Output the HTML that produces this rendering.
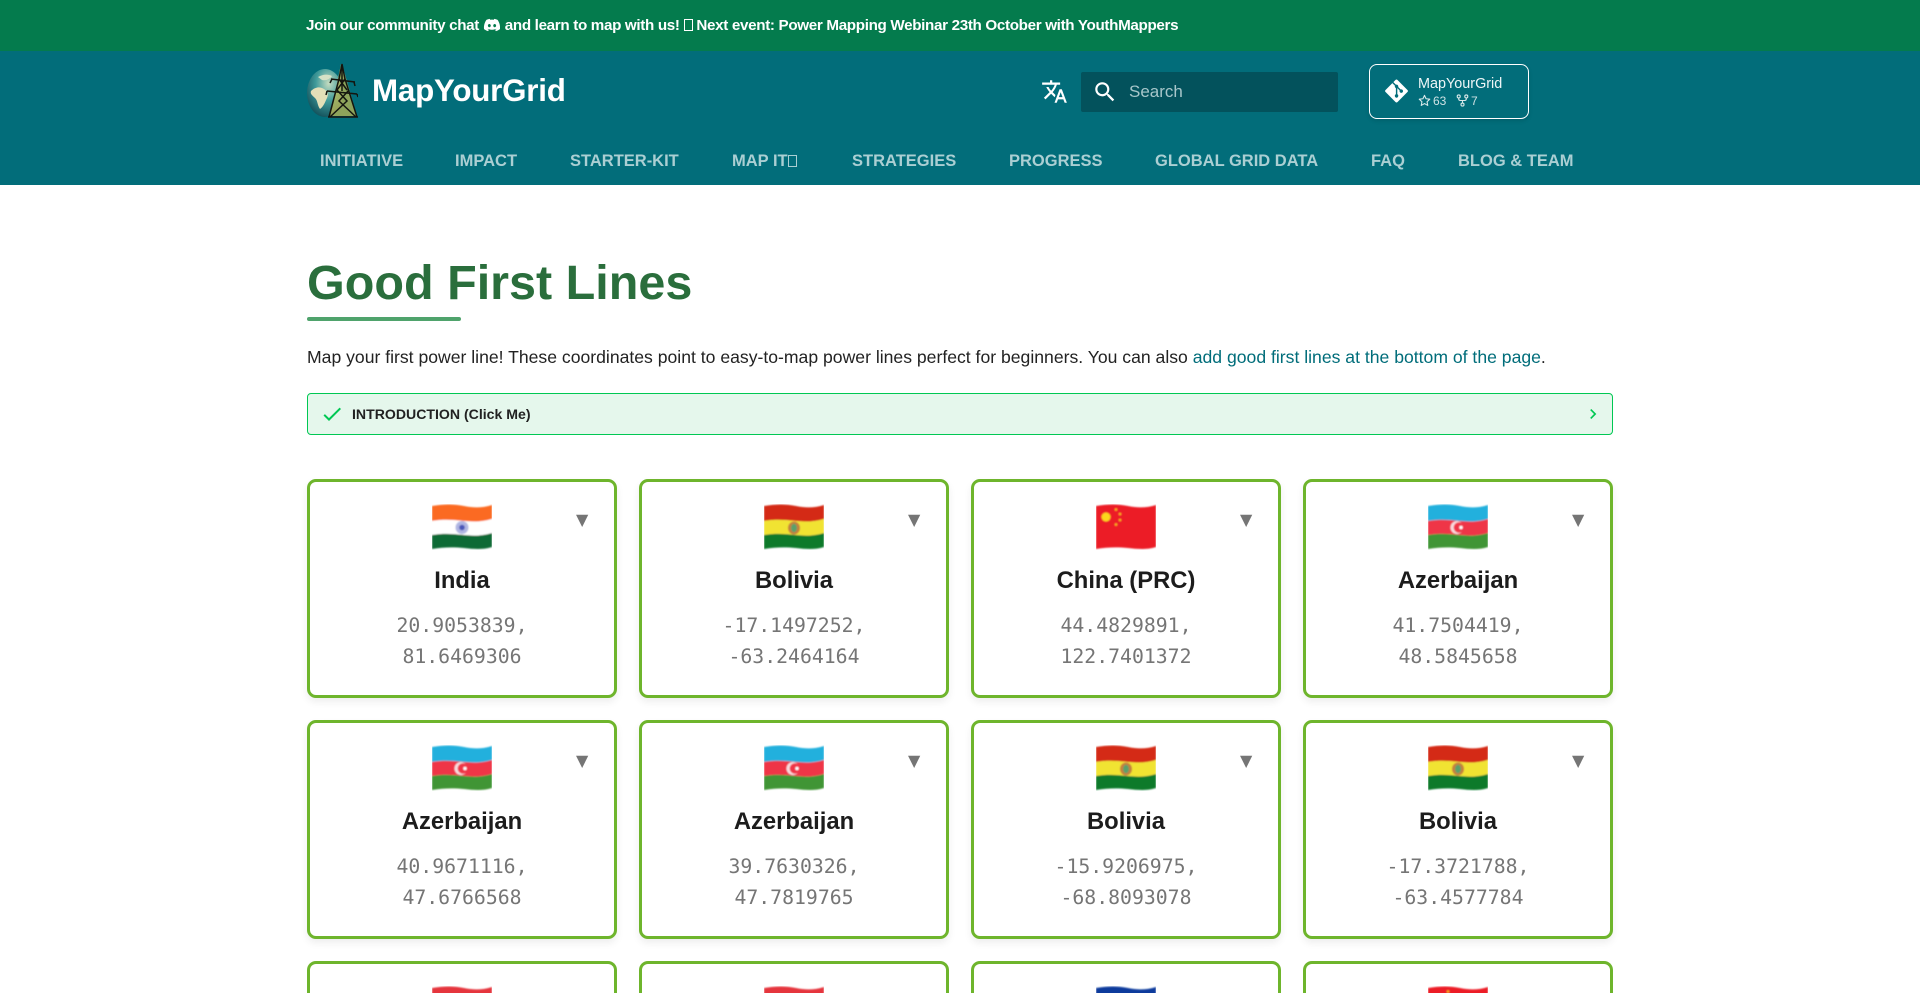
<!DOCTYPE html>
<html lang="en"><head><meta charset="utf-8"><title>Good First Lines - MapYourGrid</title>
<style>
*{box-sizing:border-box}
html,body{margin:0;padding:0;width:1920px;height:993px;overflow:hidden;background:#fff;font-family:"Liberation Sans",sans-serif;color:#222}
#wrap{position:relative;width:1920px;height:993px;overflow:hidden;contain:strict}
.abs{position:absolute}
.bar{position:absolute;left:0;top:0;width:1920px;height:51px;background:#047b4d}
.bar .t{position:absolute;left:306px;top:16px;font-size:15.2px;line-height:20px;font-weight:700;color:#fff;white-space:nowrap;letter-spacing:-.33px}
.tofu{display:inline-block;width:9px;height:12px;border:1px solid currentColor;vertical-align:-1px}
.hdr{position:absolute;left:0;top:51px;width:1920px;height:134px;background:#026d7a}
.title{position:absolute;left:372px;top:72px;font-size:31.3px;line-height:38px;font-weight:700;color:#fff;letter-spacing:-.2px}
.nav{position:absolute;top:151px;font-size:16.5px;line-height:20px;font-weight:700;color:#abcfd3;white-space:nowrap}
.search{position:absolute;left:1081px;top:72px;width:257px;height:40px;background:#03525c;border-radius:2px}
.search span{position:absolute;left:48px;top:10px;font-size:17px;line-height:20px;color:#a7c6ca}
.repo{position:absolute;left:1369px;top:64px;width:160px;height:55px;border:1px solid #fff;border-radius:8px;box-shadow:0 2px 4px rgba(0,0,0,.12)}
.rn{position:absolute;left:1418px;top:75px;font-size:14.4px;line-height:18px;color:#eef6f7;white-space:nowrap}
.rf{position:absolute;top:94px;font-size:12px;line-height:14px;color:#cfe2e4}
h1{position:absolute;left:307px;top:255px;margin:0;font-size:48.5px;line-height:56px;font-weight:700;color:#2a6e3c}
.ul{position:absolute;left:307px;top:317px;width:154px;height:4px;border-radius:2px;background:#4fa36c}
p{position:absolute;left:307px;top:346px;margin:0;font-size:17.6px;line-height:22px;color:#222;white-space:nowrap}
p a{color:#006d7a;text-decoration:none}
.adm{position:absolute;left:307px;top:393px;width:1306px;height:42px;background:#e5f7ec;border:1px solid #00c853;border-radius:4px}
.adm b{position:absolute;left:44px;top:11px;font-size:14.1px;line-height:18px;color:#222;white-space:nowrap}
.card{position:absolute;width:310px;height:219px;background:#fff;border:3px solid #6eb52c;border-radius:9px;box-shadow:0 4px 8px rgba(0,0,0,.07)}
.card.r3{height:32px;border-bottom:0;border-radius:9px 9px 0 0;box-shadow:none;overflow:hidden}
.card svg{position:absolute;left:122px;top:22px;width:60px;height:46px}
.card i{position:absolute;left:266px;top:25px;font:normal 16px/25px "DejaVu Sans",sans-serif;color:#757575}
.card b{position:absolute;left:0;right:0;top:84px;text-align:center;font-size:23.8px;line-height:30px;color:#1c1c1c}
.card code{position:absolute;left:0;right:0;top:128px;text-align:center;font:19.8px/31px "DejaVu Sans Mono",monospace;color:#757575}
</style></head><body>
<div id="wrap">
<svg width="0" height="0" style="position:absolute"><defs>
<filter id="bl" x="-5%" y="-5%" width="110%" height="110%"><feGaussianBlur stdDeviation=".8"/></filter>
<g id="in" filter="url(#bl)"><path fill="#fb6b20" d="M0 2C12 0 22 0 32 2S50 4 60 1V15C50 18 42 18 32 17S12 15 0 17Z"/><path fill="#fff" d="M0 17C12 15 22 16 32 17S50 18 60 15V29C50 32 42 32 32 31S12 29 0 31Z"/><path fill="#0b6b35" d="M0 31C12 29 22 30 32 31S50 32 60 29V43C50 46 42 45 32 44S12 43 0 45Z"/><circle cx="30" cy="23.500" r="6.500" fill="#b0b6e2"/><circle cx="30" cy="23.500" r="2.800" fill="#4a55b8"/></g>
<g id="bo" filter="url(#bl)"><path fill="#d42c13" d="M0 2C12 0 22 0 32 2S50 4 60 1V15C50 18 42 18 32 17S12 15 0 17Z"/><path fill="#f1e333" d="M0 17C12 15 22 16 32 17S50 18 60 15V29C50 32 42 32 32 31S12 29 0 31Z"/><path fill="#087a2c" d="M0 31C12 29 22 30 32 31S50 32 60 29V43C50 46 42 45 32 44S12 43 0 45Z"/><ellipse cx="30" cy="24" rx="6" ry="6.500" fill="#c4803c"/><ellipse cx="30" cy="24" rx="3" ry="4.200" fill="#5aa06a"/></g>
<g id="cn" filter="url(#bl)"><path fill="#ec1c26" d="M0 2C12 0 22 0 32 2S50 4 60 1V43C50 46 42 45 32 44S12 43 0 45Z"/><circle cx="10" cy="13" r="4.500" fill="#fbd81e"/><circle cx="20" cy="5.500" r="1.300" fill="#f7b21e"/><circle cx="24" cy="10" r="1.300" fill="#f7b21e"/><circle cx="24" cy="16" r="1.300" fill="#f7b21e"/><circle cx="20" cy="20.500" r="1.300" fill="#f7b21e"/></g>
<g id="az" filter="url(#bl)"><path fill="#22b0dd" d="M0 2C12 0 22 0 32 2S50 4 60 1V15C50 18 42 18 32 17S12 15 0 17Z"/><path fill="#ef3446" d="M0 17C12 15 22 16 32 17S50 18 60 15V29C50 32 42 32 32 31S12 29 0 31Z"/><path fill="#3f9535" d="M0 31C12 29 22 30 32 31S50 32 60 29V43C50 46 42 45 32 44S12 43 0 45Z"/><circle cx="29" cy="23.500" r="6.500" fill="#f8dde0"/><circle cx="31" cy="23.500" r="5.300" fill="#ef3446"/><circle cx="33" cy="23.500" r="1.700" fill="#fff"/></g>
<g id="re" filter="url(#bl)"><path fill="#e5363c" d="M0 2C12 0 22 0 32 2S50 4 60 1V45H0Z"/></g>
<g id="bl2" filter="url(#bl)"><path fill="#0a3a9c" d="M0 2C12 0 22 0 32 2S50 4 60 1V45H0Z"/></g>
</defs></svg>

<div class="bar"><div class="t">Join our community chat <svg width="18" height="14" viewBox="0 0 640 512" style="vertical-align:-2px"><path fill="#fff" d="M524.531,69.836a1.5,1.5,0,0,0-.764-.7A485.065,485.065,0,0,0,404.081,32.03a1.816,1.816,0,0,0-1.923.91,337.461,337.461,0,0,0-14.9,30.6,447.848,447.848,0,0,0-134.426,0,309.541,309.541,0,0,0-15.135-30.6,1.89,1.89,0,0,0-1.924-.91A483.689,483.689,0,0,0,116.085,69.137a1.712,1.712,0,0,0-.788.676C39.068,183.651,18.186,294.69,28.43,404.354a2.016,2.016,0,0,0,.765,1.375A487.666,487.666,0,0,0,176.02,479.918a1.9,1.9,0,0,0,2.063-.676A348.2,348.2,0,0,0,208.12,430.4a1.86,1.86,0,0,0-1.019-2.588,321.173,321.173,0,0,1-45.868-21.853,1.885,1.885,0,0,1-.185-3.126c3.082-2.309,6.166-4.711,9.109-7.137a1.819,1.819,0,0,1,1.9-.256c96.229,43.917,200.41,43.917,295.5,0a1.812,1.812,0,0,1,1.924.233c2.944,2.426,6.027,4.851,9.132,7.16a1.884,1.884,0,0,1-.162,3.126,301.407,301.407,0,0,1-45.89,21.83,1.875,1.875,0,0,0-1,2.611,391.055,391.055,0,0,0,30.014,48.815,1.864,1.864,0,0,0,2.063.7A486.048,486.048,0,0,0,610.7,405.729a1.882,1.882,0,0,0,.765-1.352C623.729,277.594,590.933,167.465,524.531,69.836ZM222.491,337.58c-28.972,0-52.844-26.587-52.844-59.239S193.056,219.1,222.491,219.1c29.665,0,53.306,26.82,52.843,59.239C275.334,310.993,251.924,337.58,222.491,337.58Zm195.38,0c-28.971,0-52.843-26.587-52.843-59.239S388.437,219.1,417.871,219.1c29.667,0,53.307,26.82,52.844,59.239C470.715,310.993,447.538,337.58,417.871,337.58Z"/></svg> and learn to map with us! <span class="tofu"></span> Next event: Power Mapping Webinar 23th October with YouthMappers</div></div>
<div class="hdr"></div>

<svg class="abs" style="left:306px;top:63px" width="52" height="55" viewBox="0 0 52 55">
<defs><radialGradient id="gl" cx="60%" cy="30%" r="80%"><stop offset="0" stop-color="#c5dcc0"/><stop offset=".45" stop-color="#3f9a9a"/><stop offset="1" stop-color="#0b4450"/></radialGradient></defs>
<ellipse cx="19" cy="30" rx="18" ry="24" fill="url(#gl)"/>
<path d="M5 28c5-5 10-4 13-2s5 5 3 9-3 8-7 11c-3-4-2-8-5-11s-5-4-4-7z" fill="#e3dfb8"/>
<path d="M12 14c5-3 10-3 14-1-2 3-6 5-10 4z" fill="#d6e2c6"/>
<path d="M24 53L35 1l1 0 15 52z" fill="#c9bb4f" fill-opacity=".7"/>
<g fill="none" stroke="#14150f" stroke-width="1.500"><path d="M23 54L33 16 36 1l3 15 12 38"/><path d="M24 54L41 38 31 27M50 54L33 38 43 27M33 16l8 11M39 16l-8 11"/><path d="M22 54h30"/><path d="M36 2v26"/><path d="M25 16l24 3M21 28l30 3"/><path d="M26 16l-2 4M48 19l1 4M21 28l-1 4M51 31l1 3"/></g>
</svg>
<div class="title">MapYourGrid</div>

<svg class="abs" style="left:1041px;top:78px" width="27" height="27" viewBox="0 0 24 24"><path fill="#fff" d="M12.87 15.07l-2.54-2.51.03-.03A17.52 17.52 0 0 0 14.07 6H17V4h-7V2H8v2H1v1.99h11.17C11.5 7.92 10.44 9.75 9 11.35 8.07 10.32 7.3 9.19 6.69 8h-2c.73 1.63 1.73 3.17 2.98 4.56l-5.09 5.02L4 19l5-5 3.11 3.11.76-2.04zM18.5 10h-2L12 22h2l1.120-3h4.750L21 22h2l-4.500-12zm-2.620 7l1.620-4.330L19.120 17h-3.240z"/></svg>
<div class="search"><span>Search</span></div>
<svg class="abs" style="left:1092px;top:79px" width="26" height="26" viewBox="0 0 24 24"><path fill="#fff" d="M9.500 3A6.500 6.500 0 0 1 16 9.500c0 1.610-.59 3.090-1.560 4.230l.27.27h.79l5 5-1.500 1.500-5-5v-.79l-.27-.27A6.516 6.516 0 0 1 9.500 16 6.500 6.500 0 0 1 3 9.500 6.500 6.500 0 0 1 9.500 3m0 2C7 5 5 7 5 9.500S7 14 9.500 14 14 12 14 9.500 12 5 9.500 5z"/></svg>
<div class="repo"></div>
<svg class="abs" style="left:1384px;top:78px" width="25" height="26" viewBox="0 0 448 512"><path fill="#fff" d="M439.55 236.05L244 40.45a28.87 28.87 0 0 0-40.81 0l-40.66 40.63 51.52 51.52c27.06-9.14 52.68 16.77 43.39 43.68l49.66 49.66c34.23-11.8 61.18 31 35.47 56.69-26.49 26.49-70.21-2.87-56-37.34L240.22 199v121.85c25.3 12.54 22.26 41.85 9.08 55a34.34 34.34 0 0 1-48.55 0c-17.57-17.6-11.07-46.91 11.25-56v-123c-20.8-8.51-24.6-30.74-18.64-45L142.57 101 8.45 235.14a28.86 28.86 0 0 0 0 40.81l195.61 195.6a28.86 28.86 0 0 0 40.8 0l194.69-194.69a28.86 28.86 0 0 0 0-40.81z"/></svg>
<div class="rn">MapYourGrid</div>
<svg class="abs" style="left:1418px;top:94px" width="13" height="13" viewBox="0 0 24 24"><path fill="none" stroke="#dbe9ea" stroke-width="2" stroke-linejoin="round" d="M12 2.500l2.900 6.300 6.800.8-5 4.700 1.300 6.800-6-3.400-6 3.400 1.300-6.800-5-4.700 6.800-.8z"/></svg>
<div class="rf" style="left:1433px">63</div>
<svg class="abs" style="left:1456px;top:94px" width="13" height="13" viewBox="0 0 24 24"><g fill="none" stroke="#dbe9ea" stroke-width="2"><circle cx="5" cy="4.500" r="2.800"/><circle cx="19" cy="4.500" r="2.800"/><circle cx="12" cy="19.500" r="2.800"/><path d="M5 7.500v1.500c0 2 1 3 3 3h8c2 0 3-1 3-3V7.500M12 12v4.500"/></g></svg>
<div class="rf" style="left:1471px">7</div>

<div class="nav" style="left:320px">INITIATIVE</div>
<div class="nav" style="left:455px">IMPACT</div>
<div class="nav" style="left:570px">STARTER-KIT</div>
<div class="nav" style="left:732px">MAP IT<span class="tofu"></span></div>
<div class="nav" style="left:852px">STRATEGIES</div>
<div class="nav" style="left:1009px">PROGRESS</div>
<div class="nav" style="left:1155px">GLOBAL GRID DATA</div>
<div class="nav" style="left:1371px">FAQ</div>
<div class="nav" style="left:1458px">BLOG &amp; TEAM</div>

<h1>Good First Lines</h1>
<div class="ul"></div>
<p>Map your first power line! These coordinates point to easy-to-map power lines perfect for beginners. You can also <a>add good first lines at the bottom of the page</a>.</p>

<div class="adm"><svg class="abs" style="left:12px;top:8px" width="24" height="24" viewBox="0 0 24 24"><path fill="#00c853" d="M21 7L9 19l-5.500-5.500 1.410-1.410L9 16.170 19.590 5.590 21 7z"/></svg><b>INTRODUCTION (Click Me)</b><svg class="abs" style="left:1275px;top:10px" width="20" height="20" viewBox="0 0 24 24"><path fill="#00c853" d="M8.590 16.580L13.170 12 8.590 7.410 10 6l6 6-6 6-1.410-1.420z"/></svg></div>

<div class="card" style="left:307px;top:479px"><svg viewBox="0 0 60 46"><use href="#in"/></svg><i>▼</i><b>India</b><code>20.9053839,<br>81.6469306</code></div>
<div class="card" style="left:639px;top:479px"><svg viewBox="0 0 60 46"><use href="#bo"/></svg><i>▼</i><b>Bolivia</b><code>-17.1497252,<br>-63.2464164</code></div>
<div class="card" style="left:971px;top:479px"><svg viewBox="0 0 60 46"><use href="#cn"/></svg><i>▼</i><b>China (PRC)</b><code>44.4829891,<br>122.7401372</code></div>
<div class="card" style="left:1303px;top:479px"><svg viewBox="0 0 60 46"><use href="#az"/></svg><i>▼</i><b>Azerbaijan</b><code>41.7504419,<br>48.5845658</code></div>

<div class="card" style="left:307px;top:720px"><svg viewBox="0 0 60 46"><use href="#az"/></svg><i>▼</i><b>Azerbaijan</b><code>40.9671116,<br>47.6766568</code></div>
<div class="card" style="left:639px;top:720px"><svg viewBox="0 0 60 46"><use href="#az"/></svg><i>▼</i><b>Azerbaijan</b><code>39.7630326,<br>47.7819765</code></div>
<div class="card" style="left:971px;top:720px"><svg viewBox="0 0 60 46"><use href="#bo"/></svg><i>▼</i><b>Bolivia</b><code>-15.9206975,<br>-68.8093078</code></div>
<div class="card" style="left:1303px;top:720px"><svg viewBox="0 0 60 46"><use href="#bo"/></svg><i>▼</i><b>Bolivia</b><code>-17.3721788,<br>-63.4577784</code></div>

<div class="card r3" style="left:307px;top:961px"><svg viewBox="0 0 60 46"><use href="#re"/></svg></div>
<div class="card r3" style="left:639px;top:961px"><svg viewBox="0 0 60 46"><use href="#re"/></svg></div>
<div class="card r3" style="left:971px;top:961px"><svg viewBox="0 0 60 46"><use href="#bl2"/></svg></div>
<div class="card r3" style="left:1303px;top:961px"><svg viewBox="0 0 60 46"><use href="#cn"/></svg></div>
</div>
</body></html>
